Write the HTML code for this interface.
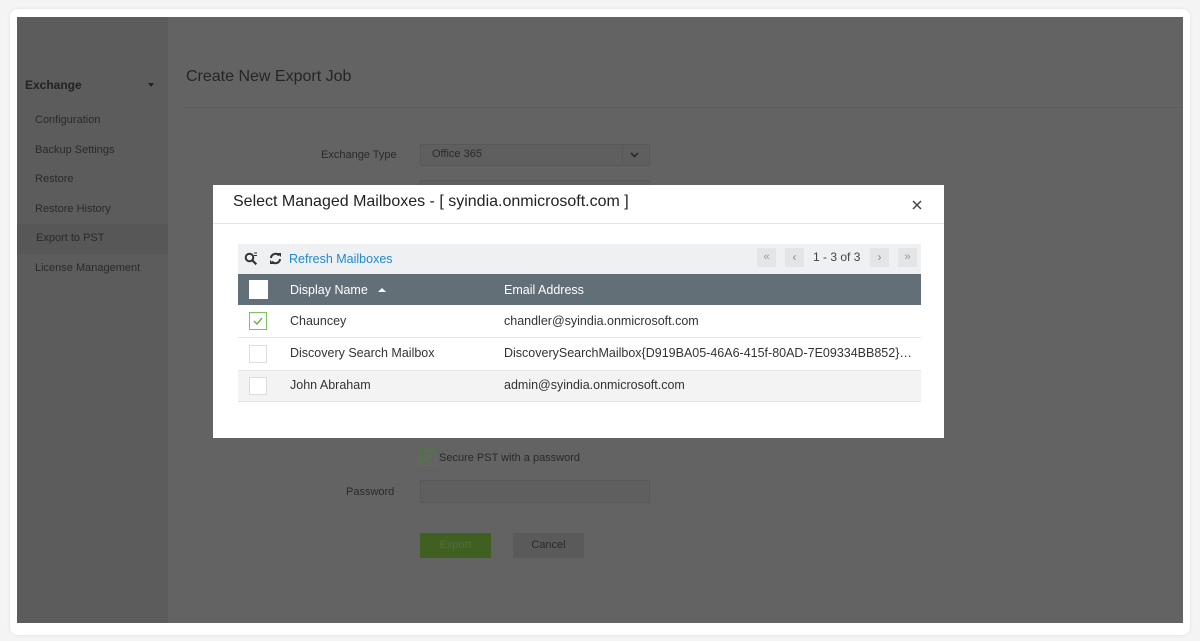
<!DOCTYPE html>
<html><head><meta charset="utf-8"><style>
*{box-sizing:border-box;margin:0;padding:0}
body{width:1200px;height:641px;background:#f4f4f4;font-family:"Liberation Sans",sans-serif;position:relative;overflow:hidden}
.a{position:absolute}
.card{left:10px;top:9px;width:1180px;height:626px;background:#fff;border-radius:8px;box-shadow:0 0 3px #ddd}
.main{left:17px;top:17px;width:1166px;height:606px;background:#636363}
.side{left:17px;top:17px;width:151px;height:606px;background:#5c5c5c}
.dt{color:#2a2a2a;font-size:11px}
.sel{background:#5f5f5f;border:1px solid #585858}
.modal{left:213px;top:185px;width:731px;height:253px;background:#fff}
.t{font-size:12.5px;color:#333}
</style></head><body>
<div class="a card"></div>
<div class="a main"></div>
<div class="a side"></div>
<div class="a" style="left:17px;top:224px;width:151px;height:30px;background:#575757"></div>
<div class="a dt" style="left:25px;top:78px;font-size:12px;font-weight:bold;color:#222">Exchange</div>
<div class="a" style="left:148px;top:83px;border:3px solid transparent;border-top:4px solid #222"></div>
<div class="a dt" style="left:35px;top:114px">Configuration</div>
<div class="a dt" style="left:35px;top:144px">Backup Settings</div>
<div class="a dt" style="left:35px;top:173px">Restore</div>
<div class="a dt" style="left:35px;top:203px">Restore History</div>
<div class="a dt" style="left:36px;top:232px">Export to PST</div>
<div class="a dt" style="left:35px;top:262px">License Management</div>
<div class="a" style="left:186px;top:68px;font-size:16px;color:#252525">Create New Export Job</div>
<div class="a" style="left:186px;top:107px;width:997px;height:1px;background:#5c5c5c"></div>
<div class="a dt" style="left:321px;top:149px">Exchange Type</div>
<div class="a sel" style="left:420px;top:144px;width:230px;height:22px"></div>
<div class="a" style="left:622px;top:144px;width:1px;height:22px;background:#585858"></div>
<div class="a dt" style="left:432px;top:148px">Office 365</div>
<svg class="a" style="left:630px;top:152px" width="9" height="6"><path d="M1 1l3.5 3.5L8 1" stroke="#2a2a2a" stroke-width="1.6" fill="none"/></svg>
<div class="a sel" style="left:420px;top:180px;width:230px;height:8px"></div>
<div class="a" style="left:420px;top:450px;width:16px;height:16px;border:1px solid #4d7d3a"></div>
<svg class="a" style="left:422px;top:452px" width="12" height="12"><path d="M2 6l3 3 5-6" stroke="#4d7d3a" stroke-width="1.4" fill="none"/></svg>
<div class="a dt" style="left:439px;top:452px">Secure PST with a password</div>
<div class="a dt" style="left:346px;top:486px">Password</div>
<div class="a sel" style="left:420px;top:480px;width:230px;height:23px"></div>
<div class="a" style="left:420px;top:533px;width:71px;height:25px;background:#3f6021;color:#566b45;font-size:11px;text-align:center;line-height:25px">Export</div>
<div class="a" style="left:513px;top:533px;width:71px;height:25px;background:#5a5a5a;color:#2a2a2a;font-size:11px;text-align:center;line-height:25px">Cancel</div>

<div class="a modal"></div>
<div class="a" style="left:233px;top:193px;font-size:16px;color:#222">Select Managed Mailboxes - [ syindia.onmicrosoft.com ]</div>
<svg class="a" style="left:912px;top:200px" width="10" height="10"><path d="M1 1l8 8M9 1l-8 8" stroke="#444" stroke-width="1.5"/></svg>
<div class="a" style="left:213px;top:223px;width:731px;height:1px;background:#e5e5e5"></div>
<div class="a" style="left:238px;top:244px;width:683px;height:30px;background:#eef0f1"></div>
<svg class="a" style="left:244px;top:252px" width="14" height="14"><circle cx="5.5" cy="5.5" r="3.8" stroke="#333" stroke-width="2" fill="none"/><path d="M8.3 8.3l4 4" stroke="#333" stroke-width="2.2"/><path d="M10 1h3M10 3.5h3" stroke="#333" stroke-width="1"/></svg>
<svg class="a" style="left:269px;top:252px" width="13" height="13"><path d="M2 6A4.5 4.5 0 0 1 10 3.5" stroke="#333" stroke-width="2" fill="none"/><path d="M11 7A4.5 4.5 0 0 1 3 9.5" stroke="#333" stroke-width="2" fill="none"/><path d="M8 1h4v4z" fill="#333"/><path d="M5 12H1V8z" fill="#333"/></svg>
<div class="a" style="left:289px;top:252px;font-size:12.5px;color:#1f8ad0">Refresh Mailboxes</div>
<div class="a" style="left:757px;top:248px;width:19px;height:19px;background:#e3e5e6;color:#999;font-size:11px;text-align:center;line-height:19px">&#171;</div>
<div class="a" style="left:785px;top:248px;width:19px;height:19px;background:#e3e5e6;color:#888;font-size:12px;text-align:center;line-height:19px">&#8249;</div>
<div class="a" style="left:813px;top:250px;font-size:12px;color:#444">1 - 3 of 3</div>
<div class="a" style="left:870px;top:248px;width:19px;height:19px;background:#e3e5e6;color:#888;font-size:12px;text-align:center;line-height:19px">&#8250;</div>
<div class="a" style="left:898px;top:248px;width:19px;height:19px;background:#e3e5e6;color:#999;font-size:11px;text-align:center;line-height:19px">&#187;</div>
<div class="a" style="left:238px;top:274px;width:683px;height:31px;background:#636f77"></div>
<div class="a" style="left:249px;top:280px;width:19px;height:19px;background:#fff"></div>
<div class="a" style="left:290px;top:283px;font-size:12.5px;color:#fff">Display Name</div>
<div class="a" style="left:378px;top:288px;border:4px solid transparent;border-bottom:4px solid #fff;border-top:0"></div>
<div class="a" style="left:504px;top:283px;font-size:12.5px;color:#fff">Email Address</div>
<div class="a" style="left:238px;top:337px;width:683px;height:1px;background:#e6e6e6"></div>
<div class="a" style="left:238px;top:370px;width:683px;height:32px;background:#f3f3f3;border-top:1px solid #e6e6e6;border-bottom:1px solid #e3e3e3"></div>
<div class="a" style="left:249px;top:312px;width:18px;height:18px;border:1px solid #7cc35e;background:#fff"></div>
<svg class="a" style="left:251px;top:314px" width="14" height="14"><path d="M3 7l3 3 5-6" stroke="#6bb84a" stroke-width="1.5" fill="none"/></svg>
<div class="a" style="left:249px;top:345px;width:18px;height:18px;border:1px solid #ddd;background:#fff"></div>
<div class="a" style="left:249px;top:377px;width:18px;height:18px;border:1px solid #ddd;background:#fff"></div>
<div class="a t" style="left:290px;top:314px">Chauncey</div>
<div class="a t" style="left:504px;top:314px">chandler@syindia.onmicrosoft.com</div>
<div class="a t" style="left:290px;top:346px">Discovery Search Mailbox</div>
<div class="a t" style="left:504px;top:346px;width:413px;white-space:nowrap;overflow:hidden;text-overflow:ellipsis">DiscoverySearchMailbox{D919BA05-46A6-415f-80AD-7E09334BB852}@syindia.onmicrosoft.com</div>
<div class="a t" style="left:290px;top:378px">John Abraham</div>
<div class="a t" style="left:504px;top:378px">admin@syindia.onmicrosoft.com</div>
</body></html>
